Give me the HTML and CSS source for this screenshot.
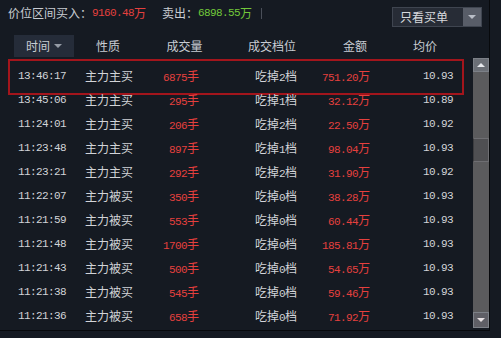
FILE: index.html
```html
<!DOCTYPE html>
<html lang="zh">
<head>
<meta charset="utf-8">
<title>主力买卖</title>
<link rel="stylesheet" href="styles.css">
</head>
<body>
<div class="app">
  <div class="topbar">
    <div class="summary">
      <span>价位区间买入：</span><span class="num red">9160.48</span><span class="red">万</span>
      <span class="gap"></span>
      <span>卖出：</span><span class="num green">6898.55</span><span class="green">万</span>
      <span class="sep"></span>
    </div>
    <div class="select">
      <span class="select-text">只看买单</span>
      <span class="select-btn"><i class="tri-down"></i></span>
    </div>
  </div>

  <div class="thead">
    <div class="th th1 active">时间<i class="sort"></i></div>
    <div class="th th2">性质</div>
    <div class="th th3">成交量</div>
    <div class="th th4">成交档位</div>
    <div class="th th5">金额</div>
    <div class="th th6">均价</div>
  </div>

  <div class="tbody">
    <div class="rows">
      <div class="row selected"><span class="c1 num">13:46:17</span><span class="c2">主力主买</span><span class="c3 red"><span class="num">6875</span>手</span><span class="c4">吃掉<span class="num">2</span>档</span><span class="c5 red"><span class="num">751.20</span>万</span><span class="c6 num">10.93</span></div>
      <div class="row"><span class="c1 num">13:45:06</span><span class="c2">主力主买</span><span class="c3 red"><span class="num">295</span>手</span><span class="c4">吃掉<span class="num">1</span>档</span><span class="c5 red"><span class="num">32.12</span>万</span><span class="c6 num">10.89</span></div>
      <div class="row"><span class="c1 num">11:24:01</span><span class="c2">主力主买</span><span class="c3 red"><span class="num">206</span>手</span><span class="c4">吃掉<span class="num">2</span>档</span><span class="c5 red"><span class="num">22.50</span>万</span><span class="c6 num">10.92</span></div>
      <div class="row"><span class="c1 num">11:23:48</span><span class="c2">主力主买</span><span class="c3 red"><span class="num">897</span>手</span><span class="c4">吃掉<span class="num">1</span>档</span><span class="c5 red"><span class="num">98.04</span>万</span><span class="c6 num">10.93</span></div>
      <div class="row"><span class="c1 num">11:23:21</span><span class="c2">主力主买</span><span class="c3 red"><span class="num">292</span>手</span><span class="c4">吃掉<span class="num">2</span>档</span><span class="c5 red"><span class="num">31.90</span>万</span><span class="c6 num">10.92</span></div>
      <div class="row"><span class="c1 num">11:22:07</span><span class="c2">主力被买</span><span class="c3 red"><span class="num">350</span>手</span><span class="c4">吃掉<span class="num">0</span>档</span><span class="c5 red"><span class="num">38.28</span>万</span><span class="c6 num">10.93</span></div>
      <div class="row"><span class="c1 num">11:21:59</span><span class="c2">主力被买</span><span class="c3 red"><span class="num">553</span>手</span><span class="c4">吃掉<span class="num">0</span>档</span><span class="c5 red"><span class="num">60.44</span>万</span><span class="c6 num">10.93</span></div>
      <div class="row"><span class="c1 num">11:21:48</span><span class="c2">主力被买</span><span class="c3 red"><span class="num">1700</span>手</span><span class="c4">吃掉<span class="num">0</span>档</span><span class="c5 red"><span class="num">185.81</span>万</span><span class="c6 num">10.93</span></div>
      <div class="row"><span class="c1 num">11:21:43</span><span class="c2">主力被买</span><span class="c3 red"><span class="num">500</span>手</span><span class="c4">吃掉<span class="num">0</span>档</span><span class="c5 red"><span class="num">54.65</span>万</span><span class="c6 num">10.93</span></div>
      <div class="row"><span class="c1 num">11:21:38</span><span class="c2">主力被买</span><span class="c3 red"><span class="num">545</span>手</span><span class="c4">吃掉<span class="num">0</span>档</span><span class="c5 red"><span class="num">59.46</span>万</span><span class="c6 num">10.93</span></div>
      <div class="row"><span class="c1 num">11:21:36</span><span class="c2">主力被买</span><span class="c3 red"><span class="num">658</span>手</span><span class="c4">吃掉<span class="num">0</span>档</span><span class="c5 red"><span class="num">71.92</span>万</span><span class="c6 num">10.93</span></div>
    </div>
    <div class="scrollbar">
      <div class="sb-btn"><i class="tri-up"></i></div>
      <div class="sb-track">
        <div class="sb-thumb"></div>
      </div>
      <div class="sb-btn down"><i class="tri-down light"></i></div>
    </div>
  </div>
</div>
</body>
</html>
```

FILE: styles.css
```css
* { box-sizing: border-box; }

html, body {
  margin: 0;
  padding: 0;
  background: #151a22;
}

body {
  width: 501px;
  height: 338px;
  overflow: hidden;
  font-family: "Noto Sans CJK SC", "Noto Sans", sans-serif;
  font-size: 12px;
  color: #d2d4d8;
}

.app {
  width: 490px;
  height: 331px;
  border-right: 1px solid #07090c;
  border-bottom: 1px solid #07090c;
  display: flex;
  flex-direction: column;
}

.num {
  font-family: "Liberation Mono", "DejaVu Sans Mono", monospace;
  font-size: 11px;
  letter-spacing: -0.6px;
}

.red { color: #e5403e; }
.green { color: #72c83a; }

/* top bar */
.topbar {
  height: 35px;
  display: flex;
  align-items: flex-start;
  justify-content: space-between;
}

.summary {
  padding-left: 8px;
  height: 26px;
  line-height: 26px;
  display: flex;
  align-items: center;
  color: #c9ccd2;
  white-space: nowrap;
}

.gap { width: 16px; }

.sep {
  width: 1px;
  height: 11px;
  margin-left: 9px;
  background: #4a4f59;
}

.select {
  margin-top: 7px;
  margin-right: 7px;
  width: 90px;
  height: 20px;
  display: flex;
  border: 1px solid #3f4550;
  background: #272c36;
}

.select-text {
  flex: 1;
  padding-left: 7px;
  line-height: 18px;
  color: #d8dade;
}

.select-btn {
  width: 18px;
  background: #585d68;
  display: flex;
  align-items: center;
  justify-content: center;
}

.tri-down {
  width: 0;
  height: 0;
  border-left: 4px solid transparent;
  border-right: 4px solid transparent;
  border-top: 4px solid #b9bec7;
}

.tri-down.light { border-top-color: #e6e0e2; }

.tri-up {
  width: 0;
  height: 0;
  border-left: 4px solid transparent;
  border-right: 4px solid transparent;
  border-bottom: 4px solid #e8eaee;
}

/* header */
.thead {
  height: 22px;
  display: flex;
  line-height: 22px;
  color: #c8ccd3;
}

.th {
  text-align: center;
  display: flex;
  align-items: center;
  justify-content: center;
}

.th1 { margin-left: 14px; width: 60px; }
.th2 { width: 68px; }
.th3 { width: 85px; }
.th4 { width: 90px; }
.th5 { width: 76px; }
.th6 { width: 64px; }

.th.active { background: #252c39; }

.sort {
  margin-left: 4px;
  width: 0;
  height: 0;
  border-left: 4px solid transparent;
  border-right: 4px solid transparent;
  border-top: 4px solid #959ba5;
}

/* body */
.tbody {
  flex: 1;
  display: flex;
  overflow: hidden;
}

.rows {
  width: 473px;
  padding-top: 7px;
}

.row {
  position: relative;
  height: 24px;
  line-height: 24px;
  display: grid;
  grid-template-columns: 67px 60px 54px 121px 50px 83px;
  padding-left: 18px;
  white-space: nowrap;
}

.c3, .c5, .c6 { text-align: right; }
.c4 { padding-left: 56px; }

.row.selected::after {
  content: "";
  position: absolute;
  left: 8px;
  top: -5px;
  width: 452px;
  height: 32px;
  border: 2px solid #a3151c;
  pointer-events: none;
}

/* scrollbar */
.scrollbar {
  width: 16px;
  margin-top: 1px;
  height: 270px;
  display: flex;
  flex-direction: column;
}

.sb-btn {
  height: 14px;
  background: #6b6f76;
  display: flex;
  align-items: center;
  justify-content: center;
  border: 1px solid #7c8087;
}

.sb-btn.down {
  height: 16px;
  background: #5f5f66;
}

.sb-track {
  flex: 1;
  background: #5b5b5d;
  padding-top: 66px;
}

.sb-thumb {
  height: 24px;
  background: #4f4f52;
  border: 1px solid #6e6e72;
  border-left-color: #3c3c3f;
}
```
